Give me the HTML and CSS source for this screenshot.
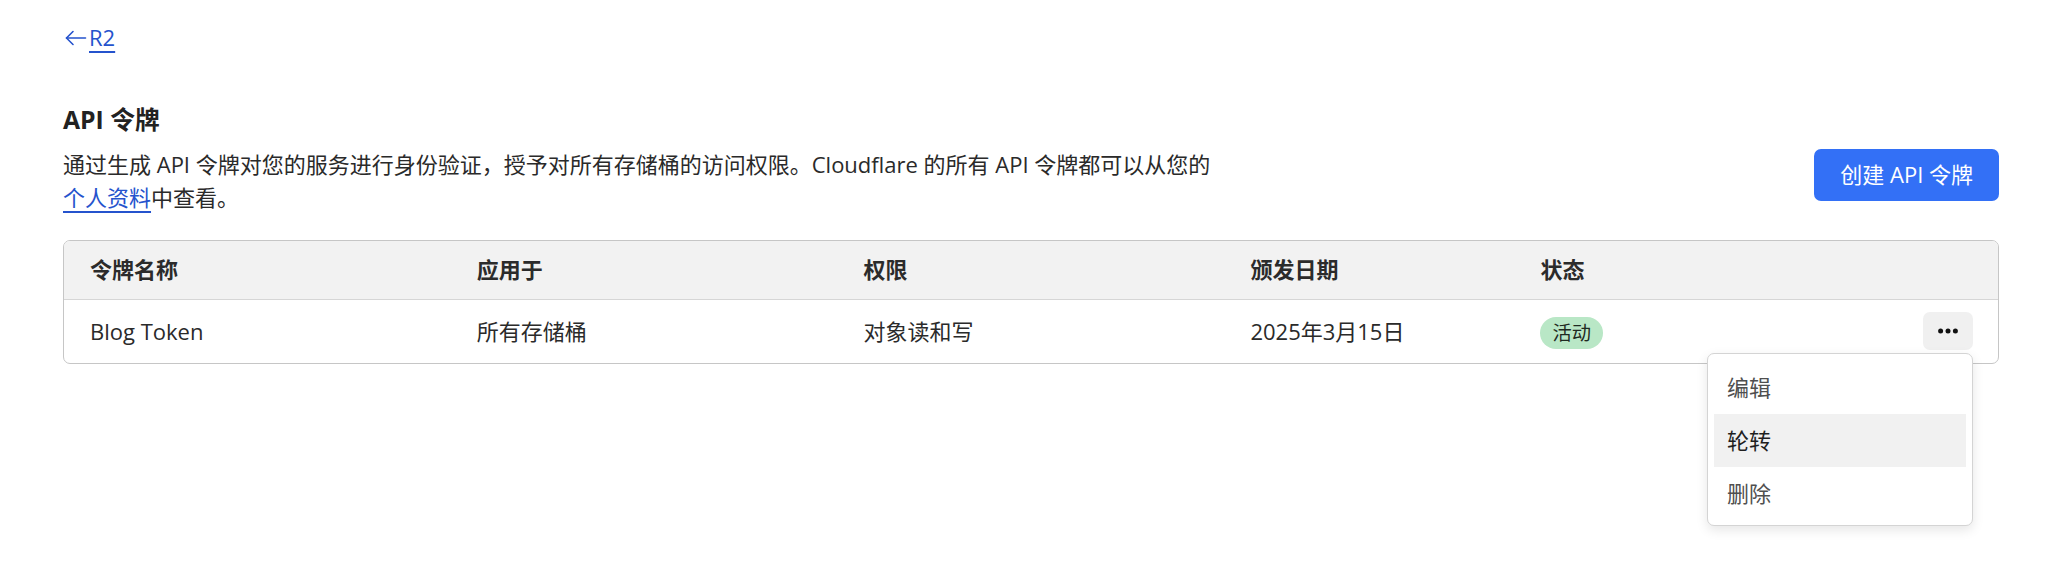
FILE: index.html
```html
<!DOCTYPE html>
<html lang="zh-CN">
<head>
<meta charset="utf-8">
<title>API 令牌</title>
<link rel="stylesheet" href="styles.css">
</head>
<body>
<div class="page">
  <a class="back" href="#">
    <svg class="back-icon" width="24" height="24" viewBox="0 0 24 24" aria-hidden="true">
      <path d="M22.5 12H3.5" />
      <path d="M10 5.5L3.5 12l6.5 6.5" />
    </svg>
    <span class="back-text">R2</span>
  </a>

  <section class="tokens">
    <h2 class="title">API 令牌</h2>
    <div class="intro">
      <p class="desc">通过生成 API 令牌对您的服务进行身份验证，授予对所有存储桶的访问权限。Cloudflare 的所有 API 令牌都可以从您的<a class="link" href="#">个人资料</a>中查看。</p>
      <button class="btn-primary" type="button">创建 API 令牌</button>
    </div>

    <div class="table">
      <div class="row head">
        <div class="cell">令牌名称</div>
        <div class="cell">应用于</div>
        <div class="cell">权限</div>
        <div class="cell">颁发日期</div>
        <div class="cell">状态</div>
        <div class="cell"></div>
      </div>
      <div class="row body">
        <div class="cell">Blog Token</div>
        <div class="cell">所有存储桶</div>
        <div class="cell">对象读和写</div>
        <div class="cell">2025年3月15日</div>
        <div class="cell"><span class="badge">活动</span></div>
        <div class="cell actions">
          <div class="menu-wrap">
            <button class="btn-more" type="button" aria-label="更多">
              <svg width="20" height="6" viewBox="0 0 20 6" aria-hidden="true">
                <circle cx="2.6" cy="3" r="2.5" />
                <circle cx="10" cy="3" r="2.5" />
                <circle cx="17.4" cy="3" r="2.5" />
              </svg>
            </button>
            <ul class="menu">
              <li class="menu-item">编辑</li>
              <li class="menu-item active">轮转</li>
              <li class="menu-item">删除</li>
            </ul>
          </div>
        </div>
      </div>
    </div>
  </section>
</div>
</body>
</html>
```

FILE: styles.css
```css
* {
  box-sizing: border-box;
}

html, body {
  margin: 0;
  background: #ffffff;
}

body {
  min-height: 587px;
  font-family: "Open Sans", "Noto Sans CJK SC", sans-serif;
  font-size: 22px;
  line-height: 33px;
  color: #2a2a2a;
}

.page {
  min-height: 587px;
  padding: 21px 56px 0 63px;
}

.back {
  display: inline-flex;
  align-items: center;
  gap: 2px;
  color: #2553cd;
  text-decoration: none;
}

.back-icon {
  fill: none;
  stroke: #2553cd;
  stroke-width: 1.6;
  stroke-linecap: round;
  stroke-linejoin: round;
}

.back-text {
  text-decoration: underline;
  text-decoration-thickness: 2px;
  text-underline-offset: 5px;
}

.tokens {
  margin-top: 43px;
}

.title {
  margin: 0;
  font-size: 24.75px;
  line-height: 37px;
  font-weight: 700;
  color: #222222;
}

.intro {
  display: flex;
  justify-content: space-between;
  align-items: flex-start;
  margin-top: 10px;
}

.desc {
  margin: 0;
  max-width: 1150px;
  color: #2a2a2a;
}

.link {
  color: #2553cd;
  text-decoration: underline;
  text-decoration-thickness: 2px;
  text-underline-offset: 5px;
}

.btn-primary {
  margin-top: 1px;
  height: 52px;
  padding: 0 26px;
  border: none;
  border-radius: 7px;
  background: #3370f6;
  color: #ffffff;
  font: inherit;
  line-height: 33px;
  white-space: nowrap;
}

.table {
  margin-top: 26px;
  border: 1px solid #c6c6c6;
  border-radius: 7px;
}

.row {
  display: grid;
  grid-template-columns: 20% 20% 20% 15% 15% 10%;
  align-items: center;
}

.row.head {
  height: 59px;
  background: #f2f2f2;
  border-bottom: 1px solid #d6d6d6;
  border-radius: 6px 6px 0 0;
  font-weight: 700;
  color: #2b2b2b;
}

.row.body {
  height: 63px;
}

.cell {
  padding: 0 26px;
  white-space: nowrap;
}

.badge {
  display: inline-block;
  height: 32px;
  padding: 0 12px;
  border-radius: 16px;
  background: #b9e7c6;
  color: #1f2a22;
  font-size: 19.25px;
  line-height: 32px;
  vertical-align: middle;
}

.actions {
  display: flex;
  justify-content: flex-end;
  padding-right: 25px;
}

.menu-wrap {
  position: relative;
}

.btn-more {
  display: flex;
  align-items: center;
  justify-content: center;
  width: 50px;
  height: 38px;
  padding: 0;
  border: none;
  border-radius: 7px;
  background: #f0f0f0;
}

.btn-more svg {
  fill: #111111;
}

.menu {
  position: absolute;
  top: calc(100% + 3px);
  right: 0;
  width: 266px;
  margin: 0;
  padding: 7px 6px 5px;
  list-style: none;
  background: #ffffff;
  border: 1px solid #d4d4d4;
  border-radius: 7px;
  box-shadow: 0 4px 12px rgba(0, 0, 0, 0.10);
  z-index: 10;
}

.menu-item {
  height: 53px;
  padding: 0 13px;
  display: flex;
  align-items: center;
  color: #4f4f4f;
}

.menu-item.active {
  background: #f1f1f1;
  color: #1f1f1f;
}
```
